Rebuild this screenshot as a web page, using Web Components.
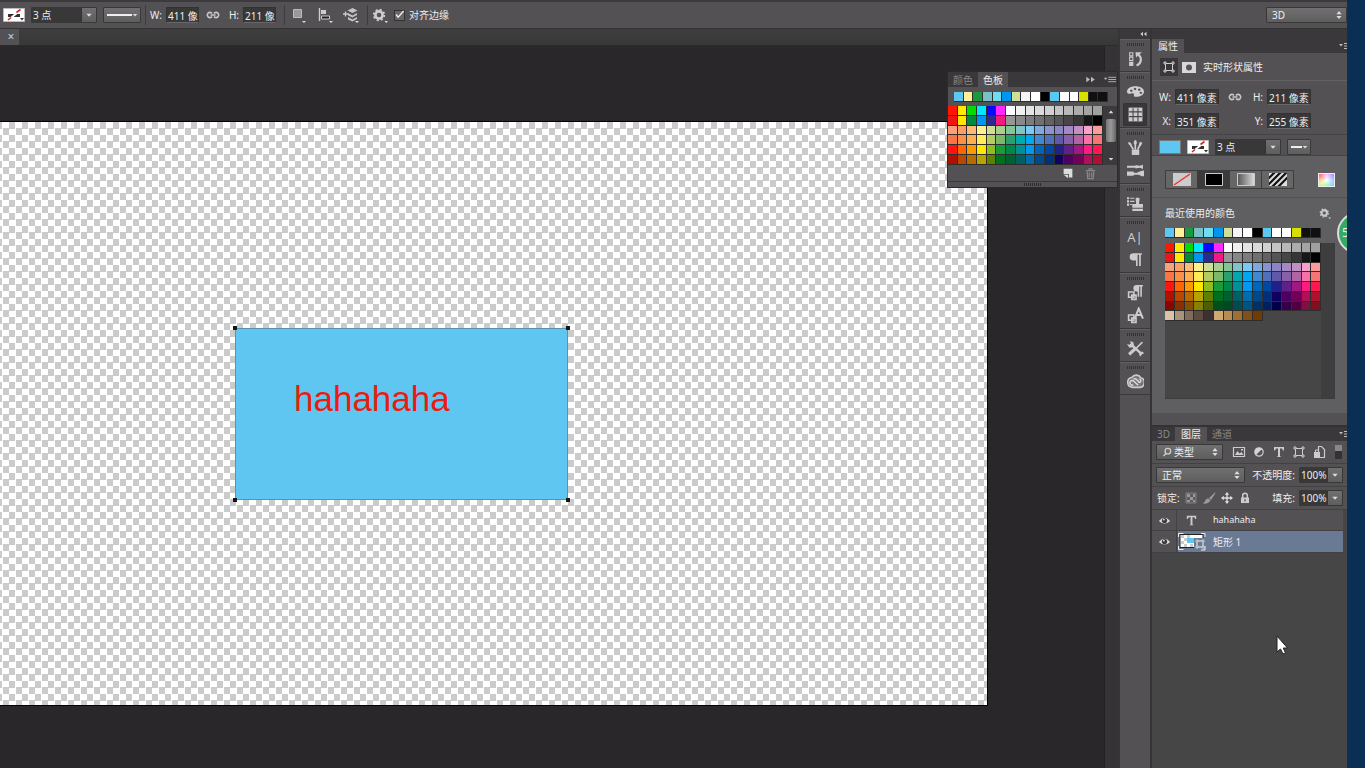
<!DOCTYPE html>
<html lang="zh-CN">
<head>
<meta charset="utf-8">
<title>图像编辑器</title>
<style>
html,body{margin:0;height:100%;background:#0b2c50;overflow:hidden}
body{font:10px/14px "Noto Sans","Noto Sans CJK SC",sans-serif;color:#eee}
</style>
</head>
<body>
<ps-app></ps-app>
<script>
const BASE = `*{box-sizing:border-box}button,input,select{font:inherit;color:inherit;margin:0;padding:0;border:0;background:none;border-radius:0;appearance:none;outline:0}svg{display:block;flex:none}[hidden]{display:none}`;

function define(name, css, html, setup) {
  const tpl = document.createElement('template');
  customElements.define(name, class extends HTMLElement {
    connectedCallback() {
      if (this.shadowRoot) return;
      const root = this.attachShadow({ mode: 'open' });
      tpl.innerHTML = `<style>${BASE}${css}</style>` + (typeof html === 'function' ? html(this) : html);
      root.append(tpl.content.cloneNode(true));
      if (setup) setup(this, root);
    }
  });
}

const GLYPHS = {
  link: '<g fill="none" stroke="#c8c8c8" stroke-width="1.6"><path d="M7 6.400a2.600 2.600 0 1 0 0 3.200M9 6.400a2.600 2.600 0 1 1 0 3.200M5.500 8h5"/></g>',
  square: '<path d="M2.500 2.500h8v8h-8z" fill="#999" stroke="#bbb"/><path d="M11 14h4l-2 2z" fill="#ddd"/>',
  align: '<path d="M2.500 1v13" stroke="#ccc" stroke-width="1.4"/><path d="M4 3h5v4H4z" fill="#ccc"/><path d="M4.500 9h8v3h-8z" fill="#222" stroke="#ccc"/><path d="M12 14h4l-2 2z" fill="#ddd"/>',
  stack: '<path d="M0 7h5M2.500 4.500v5" stroke="#ccc" stroke-width="1.3"/><path d="M9.500 1l5 2.500-5 2.500-5-2.500zM5 6l4.500 2.500L14 6v2l-4.500 2.500L5 8.500zM5 10l4.500 2.500L14 10v2l-4.500 2.500L5 12.500z" fill="#c4c4c4"/><path d="M12 14h4l-2 2z" fill="#ddd"/>',
  gear: '<circle cx="7" cy="8" r="3.600" fill="none" stroke="#ccc" stroke-width="2.600"/><circle cx="7" cy="8" r="5.300" fill="none" stroke="#ccc" stroke-width="1.800" stroke-dasharray="2.080 2.080"/><path d="M12.500 14h3.500l-1.700 2z" fill="#ddd"/>',
  history: '<path d="M2.500 2.500h3v3h-3zM2.500 6.800h3v3h-3z" fill="none" stroke="#ccc"/><path d="M2 11h4v4H2z" fill="#ccc"/><path d="M9 14.500c5-2 5-7 2-10" fill="none" stroke="#ccc" stroke-width="2"/><path d="M8 2h6l-5.500 5z" fill="#ccc"/>',
  palette: '<path fill-rule="evenodd" d="M8 3c4.500 0 8 2 8 5.200 0 2.800-3.500 4.800-7.500 4.800-2 0-2.200-1-2-2 .2-1.500-1.500-1.500-3-1C1.500 10.600 0 10 0 8c0-3 3.500-5 8-5zM4 6.200a1.200 1 0 1 0 .1 0zM7.500 4.500a1.200 1 0 1 0 .1 0zM11.500 5.200a1.200 1 0 1 0 .1 0zM13 8.200a1.200 1 0 1 0 .1 0z" fill="#d0d0d0"/>',
  grid: '<path d="M1.500 1.500h13v13h-13z" fill="#ccc"/><path d="M2 5.500h12M2 10h12M5.700 2v12M10.300 2v12" stroke="#444" stroke-width="1"/>',
  brushes: '<path d="M4.500 10h7v5h-7z" fill="#ccc"/><path d="M7.800 10V2M6 10L3 5M10 10l3-6" stroke="#ccc" stroke-width="1.600"/><path d="M6.500 5c-.5-3 1-4 1.500-4s1.800 1.500 1 4zM1 3c2 0 3 .5 3.500 3-2 0-3.500-1-3.500-3zM12 2.500l2.500 1-1.500 3h-2z" fill="#ccc"/>',
  presets: '<path d="M0 4.500h10M6 11h10" stroke="#ccc" stroke-width="1.800"/><path d="M8 3l4 .5 3-1v4l-3-1-4 .5zM16 8c-3 0-4 1-7 2.500 3 1.500 4 3 7 3zM0 9h6l1 2-1 2H0z" fill="#ccc"/>',
  stamp: '<path d="M0 2h2v2H0zM0 5h2v2H0zM0 8h2v2H0zM3 2.500h4v1H3zM3 5.500h4v1H3zM3 8.500h2v1H3z" fill="#ccc"/><path d="M8.500 2.500h3c1 2-.5 3 0 6H15V12H5V8.500h3.500c.5-3-1-4 0-6zM5 13h10v2H5z" fill="#ccc"/>',
  para: '<path d="M6 2h8v1.500h-1V14h-1.600V3.500H10V14H8.500V9H6a3.500 3.500 0 0 1 0-7z" fill="#ccc"/>',
  parastyle: '<path d="M9 1h6v1.300h-1V12h-1.500V2.300H11.500V12H10V7H9a3 3 0 0 1 0-6z" fill="#ccc"/><path d="M1.500 7.500h5v5h-5zM4.500 10.500h4v4h-4z" fill="#535154" stroke="#ccc" stroke-width="1.500"/>',
  charstyle: '<path d="M1.500 7.500h5v5h-5zM4.500 10.500h4v4h-4z" fill="#535154" stroke="#ccc" stroke-width="1.500"/><path fill="none" stroke="#ccc" stroke-width="1.900" d="M7.500 10.500l3.500-9 4 9.500M9 7.500h5"/>',
  tools: '<path d="M4.500 4.500l9.500 9" stroke="#ccc" stroke-width="2.200"/><path d="M14.500 2L8 8.500" stroke="#ccc" stroke-width="1.500"/><path d="M8 8L2 13.500" stroke="#ccc" stroke-width="3"/><path d="M0 3.500l2 1 1.500-1L3 1l3 1 .5 3L5 7H2zM12 11l3 0 1 2-1.500 0-1.500 1 .5 1.500-2-1z" fill="#ccc"/>',
  cloud: '<path d="M5 13.500a4.700 4.700 0 0 1-.5-9.300A5 5 0 0 1 13 4.500 4.600 4.600 0 0 1 12 13.500z" fill="#777" stroke="#ccc" stroke-width="1.500"/><path d="M10.500 11.500L6.500 7.700a2.200 2.200 0 1 0-.5 3.500M6 5.800c3-1.500 4 1.500 5.500 3.200a1.600 1.600 0 0 0 0-3.200" fill="none" stroke="#ddd" stroke-width="1.300"/>',
  shape: '<path d="M4.500 4.500h7v7h-7z" fill="none" stroke="#ccc"/><path d="M3 3h2v2H3zM11 3h2v2h-2zM3 11h2v2H3zM11 11h2v2h-2z" fill="#444" stroke="#ccc"/>',
  mask: '<path d="M1 3h14v11H1z" fill="#d8d8d8"/><circle cx="8" cy="8.500" r="3" fill="#555"/>',
  image: '<path d="M2.500 3.500h11v9h-11z" fill="none" stroke="#ccc" stroke-width="1.200"/><path d="M4 11l2.500-4 2 2.500L10.500 8l2 3z" fill="#ccc"/><path d="M10 5h2v1.500h-2z" fill="#ccc"/>',
  adjust: '<circle cx="8" cy="8" r="4.200" fill="#555" stroke="#ccc" stroke-width="1.200"/><path d="M5 11A4.200 4.200 0 0 1 11 5z" fill="#d4d4d4"/>',
  smart: '<path d="M7.500 2.500h3l3 3v8h-6z" fill="none" stroke="#ccc" stroke-width="1.200"/><path d="M3 8h6v6H3z" fill="#ccc"/><path d="M4.500 8V6h3v2" fill="none" stroke="#ccc"/>',
  checker: '<path d="M3 3h10v10H3z" fill="#5c5c5c" stroke="#808080"/><path d="M4 4h3v3H4zM10 4h2v3h-2zM7 7h3v3H7zM4 10h3v2H4zM10 10h2v2h-2z" fill="#999"/>',
  brush: '<path d="M14.500 2L8 8l2 2 4-6zM7.500 8.500l2 2c-1.500 3-5 3.500-8 3 2-.8 2.500-2 3-3.500.5-1.200 2-1.800 3-1.500z" fill="#999"/>',
  move: '<path d="M8 3v10M3 8h10" stroke="#ddd" stroke-width="1.400"/><path d="M8 2l2.200 2.800H5.800zM8 14l2.200-2.800H5.800zM2 8l2.800-2.200v4.400zM14 8l-2.800-2.200v4.400z" fill="#ddd"/>',
  lock: '<path d="M5.700 8V5.500a2.300 2.300 0 0 1 4.600 0V8" fill="none" stroke="#ccc" stroke-width="1.500"/><path d="M4 7.500h8V13H4z" fill="#ccc"/><path d="M7.500 9h1v2.500h-1z" fill="#444"/>',
  eye: '<path d="M2 8.500Q8 1.500 14 8.500 8 14 2 8.500z" fill="#ddd"/><circle cx="8" cy="8" r="2.800" fill="#3c3c3c"/><circle cx="7.300" cy="7" r="1" fill="#ddd"/>',
  search: '<circle cx="9" cy="7" r="3.200" fill="none" stroke="#ccc" stroke-width="1.500"/><path d="M7 9.500L4 12.500" stroke="#ccc" stroke-width="1.600"/>',
  newpage: '<path d="M3 3h10v10H9V9H3z" fill="#ddd"/><path d="M3 10h5v4z" fill="#ddd"/>',
  trash: '<path d="M3 5h10M6.500 4V3h3v1M4.500 6l.5 7.500h6l.5-7.500M6.700 7v5M9.300 7v5" fill="none" stroke="#888" stroke-width="1.300"/>',
  menu: '<path d="M1 6h4L3 8.500z" fill="#bbb"/><path d="M6 5.500h9M6 8h9M6 10.500h9" stroke="#bbb"/>',
  updown: '<path d="M5 7h6L8 3.500zM5 9h6l-3 3.500z" fill="#ddd"/>',
  down: '<path d="M5 6.500h6L8 10z" fill="#ddd"/>',
  ffwd: '<path d="M3 5l4 3-4 3zM8 5l4 3-4 3z" fill="#bbb"/>',
  rewind: '<path d="M8 5.500L5 8l3 2.500zM12 5.500L9 8l3 2.500z" fill="#ccc"/>',
  check: '<path d="M3 6.500l3 4L14 1.500" fill="none" stroke="#eee" stroke-width="2"/>',
  layert: '<path d="M3 3h10v3.500h-1L11 4.500H9v7.700l1.500.8H5.500L7 12.200V4.500H5L4 6.500H3z" fill="#ccc"/>',
};
const ico = (n, s = 16) => `<svg width="${s}" height="${s}" viewBox="0 0 16 16" aria-hidden="true">${GLYPHS[n]}</svg>`;

const LINE_NONE = '<svg width="22" height="14" viewBox="0 0 22 14" aria-hidden="true"><path d="M.5.5h21v13H.5z" fill="#fff" stroke="#bbb"/><path d="M5 6h12v3H5z" fill="#333"/><path d="M6 11.500L17 2.500" stroke="#fff" stroke-width="2"/><path d="M5 12l3-2.500M13.500 4.500l4-3" stroke="#d22" stroke-width="1.600"/><path d="M17 10h4l-2 2.500z" fill="#333"/></svg>';

/* colour data */
const RECENT = '#5ec6f2 #fff09a #1a9a3c #7ac0c8 #6fdcf0 #0095ee #cfdf9a #f5f5f8 #ffffff #000000 #5ec6f2 #ffffff #ffffff #d8e000 #101010 #101010'.split(' ');
const COLORS = `#ff1800 #ffea00 #00dc00 #00e8ff #0808ff #ff28ff #ffffff #f0f0f0 #e4e4e4 #dadada #d0d0d0 #c4c4c4 #b8b8b8 #acacac #a4a4a4 #a0a0a0
#f01515 #ffe800 #008a3c #0095f0 #2a2a90 #f01a80 #959595 #888888 #7c7c7c #707070 #626262 #555555 #464646 #363636 #161616 #000000
#fba078 #fba068 #fdba78 #fff090 #cfdf98 #a8cf90 #86c498 #80c4c8 #78c8f8 #80a8e0 #8894d0 #8c84c4 #a488c4 #c090c4 #f8a0c8 #fa9c9c
#fa7444 #fb9048 #fcb050 #ffec58 #b4cc60 #7cb86c #28a070 #00a8b0 #00a8f4 #4088d0 #5070bc #6058a8 #8860a8 #b064a4 #f870a4 #f87474
#ff1510 #ff6600 #ff9900 #ffe800 #90bc20 #1c9a3a #008848 #009098 #0098f0 #0066b8 #0048a0 #202088 #602088 #a01880 #ff1a80 #ff1850
#b01000 #b84800 #b86c00 #b8a400 #608000 #007020 #006030 #006064 #006cac #004888 #003078 #100060 #4c0060 #700058 #b01058 #b01030
#880800 #883000 #885000 #888000 #4c6000 #005018 #004820 #004c50 #005484 #003068 #002060 #000048 #340048 #500040 #801040 #801020
#d8c4a8 #a8947c #806c58 #5c4c40 #3c3030 #d0a870 #b88c50 #a07030 #805018 #703c00`.split(/\s+/);

define('ps-swatches', `:host{display:block}div{display:grid;grid-template-columns:repeat(16,1fr);height:100%}button{display:block;width:100%;height:100%;border:solid #2e2e2e;border-width:0 1px 1px 0}`,
  el => {
    const rows = +el.getAttribute('rows');
    const list = rows === 1 ? RECENT : COLORS.slice(0, rows * 16);
    return `<div style="grid-template-rows:repeat(${rows},1fr)">${list.map(c => `<button aria-label="${c}" style="background:${c}"></button>`).join('')}</div>`;
  });

/* labelled number field */
define('ps-field', `:host{display:block}label{display:flex;align-items:center;gap:4px}span{text-align:right;width:12px}input{width:var(--w,44px);height:16px;background:#383838;border:1px solid #323232;border-bottom-color:#686868;padding-left:1px}`,
  el => `<label><span>${el.getAttribute('label')}</span><input value="${el.getAttribute('value')}"></label>`);

/* drop-down: the arrow sits over the native select */
define('ps-select', `:host{display:block;height:16px}
div{display:grid;height:100%;background:linear-gradient(#707070,#5e5e5e);border:1px solid #383838;border-radius:1px;align-items:center}
select{grid-area:1/1;width:100%;height:100%;padding-left:var(--pad,5px)}option{color:#000}
i{grid-area:1/1;justify-self:end;display:flex;align-items:center;height:100%;pointer-events:none}
.line i{width:10px;justify-content:center}
.field{background:#383838}.field i{background:linear-gradient(#707070,#5e5e5e);border-left:1px solid #333}
b{grid-area:1/1;pointer-events:none;display:flex;padding-left:3px}
b u{flex:1;height:2px;background:#eee;margin-right:8px}`,
  el => {
    const kind = el.getAttribute('kind') || '';
    const mark = kind === 'line' ? '<b><u></u></b>' : el.hasAttribute('icon') ? `<b>${ico(el.getAttribute('icon'), 14)}</b>` : '';
    return `<div class="${kind}"><select aria-label="${el.getAttribute('label')}"><option>${el.getAttribute('value') || ''}</option></select>${mark}<i>${ico(el.hasAttribute('both') ? 'updown' : 'down', kind === 'line' ? 12 : 14)}</i></div>`;
  });

define('ps-options', `:host{display:flex;align-items:center;height:29px;background:#535154;border-top:2px solid #3c3a3d;border-bottom:1px solid #333;padding-left:3px}
.g{display:flex;align-items:center}
.s{gap:6px}hr{width:1px;height:20px;border:0;background:#3e3c3f;margin:0 4px}
.link{margin:0 6px}
button{display:block}.tools{gap:10px;margin:0 4px 0 2px}
label.c{display:flex;align-items:center;gap:4px;margin-left:6px}.box{display:grid;width:11px;height:11px}.box>*{grid-area:1/1}.box input{background:#666;border:1px solid #333;width:11px;height:11px}.box svg{pointer-events:none}
.mode{width:81px;margin-left:auto}`,
  `<div class="g s"><button aria-label="描边">${LINE_NONE}</button><ps-select kind="field" label="描边宽度" value="3 点" style="width:66px;--pad:1px"></ps-select><ps-select kind="line" label="线型" style="width:38px"></ps-select></div><hr>
  <ps-field label="W:" value="411 像素" style="--w:33px"></ps-field><button class="link" aria-label="链接">${ico('link')}</button><ps-field label="H:" value="211 像素" style="--w:33px"></ps-field><hr style="margin-left:8px">
  <div class="g tools"><button aria-label="路径操作">${ico('square')}</button><button aria-label="对齐">${ico('align')}</button><button aria-label="排列">${ico('stack')}</button></div><hr>
  <button aria-label="设置">${ico('gear')}</button>
  <label class="c"><span class="box"><input type="checkbox" checked>${ico('check', 11)}</span>对齐边缘</label>
  <ps-select class="mode" both label="工作区" value="3D"></ps-select>`);

define('ps-shape', `:host{display:block;position:absolute;left:235px;top:206px;width:333px;height:172px;background:#5ec6f0;border:1px solid #5a93ad}
p{margin:48px 0 0 58px;font:35px/44px "Liberation Sans",sans-serif;color:#e81c10;width:max-content}
i{position:absolute;width:4px;height:4px;background:#161616}
i:nth-of-type(odd){left:-3px}i:nth-of-type(even){right:-3px}i:nth-of-type(-n+2){top:-3px}i:nth-of-type(n+3){bottom:-3px}`,
  `<p>hahahaha</p><i></i><i></i><i></i><i></i>`);

define('ps-workspace', `:host{display:flex;flex-direction:column;min-width:0;position:relative;background:#29272a}
.tabs{height:17px;background:linear-gradient(#3e3e3e,#383838);border-bottom:1px solid #2a2a2a;display:flex}
.tabs button{width:19px;background:#535154;font-size:12px;line-height:14px;color:#ccc;padding-left:3px}
.body{flex:1;display:flex;min-height:0}
.view{flex:1;display:flex;padding:76px 117px 63px 0}
.canvas{flex:1;position:relative;outline:1px solid #000;background:conic-gradient(#fff 25%,#cbcbcb 0 50%,#fff 0 75%,#cbcbcb 0) 9px 0/13px 13px}
.bar{width:14px;background:#353336;border-left:1px solid #222}`,
  `<div class="tabs"><button aria-label="关闭">×</button></div><div class="body"><div class="view"><div class="canvas"><ps-shape></ps-shape></div></div><div class="bar"></div></div><ps-float></ps-float>`);

define('ps-float', `:host{display:block;position:absolute;right:0;top:42px;width:171px;background:#535154;border:1px solid #2c2a2d}
.tabs{display:flex;align-items:stretch;height:15px;background:#3a383b;color:#888}
.tabs button{padding:0 5px}.tabs .on{background:#535154;color:#eee}.tabs span{margin-left:auto;display:flex;gap:4px}
.tabs svg{height:15px}
.recent{margin:5px 9px 4px 6px;height:10px}
.main{display:flex;height:59px}.main ps-swatches{width:156px}
.sb{flex:1;background:#3c3a3d;display:flex;flex-direction:column;align-items:center;justify-content:space-between;padding:0 0 0 2px}
.sb i{width:10px;height:23px;border-radius:2px;background:linear-gradient(90deg,#777,#999,#666);margin-top:-10px}
.up{transform:rotate(180deg)}
footer{display:flex;justify-content:flex-end;height:16px;align-items:center;gap:8px;padding-right:19px}
.grip{height:6px;border-top:1px solid #3a383b;display:flex;justify-content:center;align-items:center}.grip i{width:17px;height:3px;background:repeating-linear-gradient(90deg,#2e2e2e 0 1px,#535154 1px 2px)}`,
  `<div class="tabs"><button>颜色</button><button class="on">色板</button><span>${ico('ffwd')}${ico('menu', 14)}</span></div>
  <ps-swatches class="recent" rows="1"></ps-swatches>
  <div class="main"><ps-swatches rows="6"></ps-swatches><div class="sb"><span class="up">${ico('down', 12)}</span><i></i>${ico('down', 12)}</div></div>
  <footer><button aria-label="新建">${ico('newpage', 14)}</button><button aria-label="删除">${ico('trash', 15)}</button></footer><div class="grip"><i></i></div>`);

const RAIL = [['history'], ['palette', 'grid'], ['brushes', 'presets'], ['stamp'], ['A', 'para'], ['parastyle', 'charstyle'], ['tools'], ['cloud']];
define('ps-rail', `:host{display:block;width:34px;background:#535154;border:solid #363437;border-width:0 2px}
.top{height:10px;background:#3a383b;display:flex;justify-content:flex-end;align-items:center}
section{border-bottom:1px solid #3a383b;border-top:1px solid #616062;padding:2px 0 1px;display:flex;flex-direction:column;align-items:center}
i{width:17px;height:3px;margin:1px 0;background:repeating-linear-gradient(90deg,#333 0 1px,#535154 1px 2px)}
button{width:24px;height:23px;display:flex;align-items:center;justify-content:center;font-size:13px;line-height:14px;color:#ccc}
button.on{background:#39373a;border-radius:2px;box-shadow:0 0 0 1px #333 inset}`,
  `<div class="top">${ico('rewind', 14)}</div>` + RAIL.map(g => `<section><i></i>${g.map(n => `<button class="${n === 'grid' ? 'on' : ''}" aria-label="${n}">${n === 'A' ? 'A|' : ico(n, 17)}</button>`).join('')}</section>`).join(''));

define('ps-properties', `:host{display:block;background:#535154}
.strip{height:10px;background:#3a383b}
.tabs{display:flex;height:14px;background:#3a383b}.tabs button{background:#535154;padding:0 6px;line-height:14px}.tabs svg{margin:-1px -7px 0 auto}
.head{display:flex;align-items:center;height:28px;gap:3px;padding-left:8px;border-bottom:1px solid #636163}
.head button{display:flex}.head .on{background:#39373a;padding:1px}.head span{margin-left:3px}
.fields{display:grid;grid-template-columns:60px 32px 60px;row-gap:8px;padding:8px 0 5px 7px;align-items:center;border-bottom:1px solid #454346}
.fields button{margin:auto}
.stroke{display:flex;height:20px;padding-top:3px;align-items:center;gap:6px;padding-left:7px}.fill{width:22px;height:14px;background:#5ec6f2;border:1px solid #777}
.pop{background:#5f5e60;border-top:1px solid #444;padding-bottom:14px}
.seg{display:flex;align-items:center;padding:14px 12px 8px 13px;border-bottom:1px solid #525153}
.seg button{width:33px;height:19px;border:1px solid #3c3c3c;background:#666;display:grid;place-items:center;margin-right:-1px}
.seg .on{background:#3c3a3d}.seg .pick{margin:0 0 0 auto;width:17px;height:14px;border:1px solid #eee;background:radial-gradient(#fff,#fff0),conic-gradient(#f9f,#88f,#6cf,#6f8,#ee5,#f55,#f9f)}
.title{display:flex;justify-content:space-between;align-items:center;padding:8px 16px 0 13px}
.recent{width:156px;height:10px;margin:8px 0 5px 13px}
.list{display:flex;margin:0 12px 0 13px;height:156px;background:#464646;border:solid #3c3c3c;border-width:0 1px 1px 0}
.list ps-swatches{width:156px;height:78px}.list i{flex:1;background:#3e3e3e}`,
  `<div class="strip"></div><div class="tabs"><button>属性</button>${ico('menu')}</div>
  <div class="head"><button class="on" aria-label="形状">${ico('shape')}</button><button aria-label="蒙版">${ico('mask')}</button><span>实时形状属性</span></div>
  <div class="fields"><ps-field label="W:" value="411 像素"></ps-field><button aria-label="链接">${ico('link')}</button><ps-field label="H:" value="211 像素"></ps-field>
  <ps-field label="X:" value="351 像素"></ps-field><span></span><ps-field label="Y:" value="255 像素"></ps-field></div>
  <div class="stroke"><button class="fill" aria-label="填充"></button><button aria-label="描边">${LINE_NONE}</button><ps-select kind="field" label="描边宽度" value="3 点" style="width:66px;--pad:1px"></ps-select><ps-select kind="line" label="线型" style="width:24px"></ps-select></div>
  <div class="pop"><div class="seg">
  <button aria-label="无颜色"><svg width="18" height="13"><path d="M0 0h18v13H0z" fill="#ccc"/><path d="M1 12L17 1" stroke="#e33" stroke-width="1.500"/></svg></button>
  <button class="on" aria-label="纯色"><svg width="18" height="13"><path d="M.5.5h17v12H.5z" stroke="#ccc"/></svg></button>
  <button aria-label="渐变"><svg width="18" height="13"><defs><linearGradient id="g"><stop stop-color="#555"/><stop offset="1" stop-color="#ddd"/></linearGradient></defs><path d="M.5.5h17v12H.5z" fill="url(#g)" stroke="#ccc"/></svg></button>
  <button aria-label="图案"><svg width="18" height="13"><path d="M0 0h18v13H0z" fill="#ddd"/><path d="M-2 7l8-8M-2 13L12-1M3 14L18-1M9 14L20 3" stroke="#111" stroke-width="2.200"/></svg></button>
  <button class="pick" aria-label="拾色器"></button></div>
  <div class="title"><span>最近使用的颜色</span><button aria-label="选项">${ico('gear', 12)}</button></div>
  <ps-swatches class="recent" rows="1"></ps-swatches><div class="list"><ps-swatches rows="8"></ps-swatches><i></i></div></div>`);

define('ps-layer', `:host{display:flex;align-items:center;height:21px;border-bottom:1px solid #434144;margin-right:4px;background:#535154;font-size:9px}
:host([selected]){background:linear-gradient(90deg,#535154 26px,#6b7a94 26px);font-size:10px;height:22px}
.e{width:25px;display:flex;justify-content:center;border-right:1px solid #434144;height:100%;align-items:center}
.t{width:29px;display:flex;justify-content:center}span{padding-left:7px}`,
  el => `<button class="e" aria-label="可见性">${ico('eye', 15)}</button><div class="t">${el.hasAttribute('selected')
    ? '<svg width="29" height="19" viewBox="0 0 29 19"><path d="M3 2.500h23v13H3z" fill="#fff" stroke="#222"/><path d="M4 3h3v3H4zM10 3h3v3h-3zM7 6h3v3H7zM4 9h3v3H4zM7 12h3v3H7zM13 12h3v3h-3z" fill="#ccc"/><path d="M10 6h7v5h-7z" fill="#5ec6f0"/><path d="M17 6h11v11H17z" fill="#6b7a94"/><path d="M20 9h6v6h-6z" fill="none" stroke="#eee"/><path d="M19 8h2v2h-2zM25 8h2v2h-2zM19 14h2v2h-2zM25 14h2v2h-2z" fill="#6b7a94" stroke="#ddd" stroke-width=".8"/><path d="M1.500 5V1.500h5M24 1.500h4V5M1.500 14v3.500h5M24 18h4v-4" fill="none" stroke="#eee"/></svg>'
    : ico('layert', 15)}</div><span><slot></slot></span>`);

define('ps-layers', `:host{display:flex;flex-direction:column;flex:1;background:#464646;border-top:2px solid #343235;min-height:0}
.tabs{display:flex;height:14px;background:#3a383b;color:#888}.tabs button{padding:0 5px;line-height:14px}.tabs .on{background:#535154;color:#eee;padding:0 6px}.tabs svg{margin:-1px -7px 0 auto}
.row{display:flex;align-items:center;height:23px;background:#535154;border-bottom:1px solid #434144;padding-left:4px}
.type{width:67px;--pad:17px}.filters{display:flex;align-items:center;gap:4px;margin-left:8px}.row i{width:7px;height:14px;background:linear-gradient(#888 45%,#333 45%);margin-left:8px}
.mode{width:89px}.row label{margin-left:auto;margin-right:4px}.pct{width:44px;--pad:1px;margin-right:4px}
.lock{padding-left:5px}.locks{display:flex;gap:2px;margin-left:3px}.locks button,.filters button{display:block}`,
  `<div class="tabs"><button>3D</button><button class="on">图层</button><button>通道</button>${ico('menu')}</div>
  <div class="row"><ps-select class="type" both icon="search" label="过滤" value="类型"></ps-select><div class="filters">${['image', 'adjust', 'layert', 'shape', 'smart'].map(n => `<button aria-label="${n}">${ico(n)}</button>`).join('')}</div><i></i></div>
  <div class="row"><ps-select class="mode" both label="混合模式" value="正常"></ps-select><label>不透明度:</label><ps-select class="pct" kind="field" label="不透明度" value="100%"></ps-select></div>
  <div class="row lock"><span>锁定:</span><div class="locks">${['checker', 'brush', 'move', 'lock'].map(n => `<button aria-label="${n}">${ico(n)}</button>`).join('')}</div><label>填充:</label><ps-select class="pct" kind="field" label="填充" value="100%"></ps-select></div>
  <ps-layer>hahahaha</ps-layer><ps-layer selected>矩形 1</ps-layer>`);

define('ps-app', `:host{display:flex;height:100vh}
.window{flex:1;min-width:0;display:flex;flex-direction:column;position:relative;overflow:hidden;border-right:1px solid #2c2440}
.main{flex:1;display:flex;min-height:0}ps-workspace{flex:1}
aside{width:195px;display:flex;flex-direction:column;background:#535154}
ps-layers{margin-top:12px}
.edge{width:17px;background:#0b2f54}
.badge{position:absolute;right:-32px;top:212px;width:42px;height:42px;border-radius:50%;background:#36aa60;border:2px solid #ddd;font-size:12px;line-height:38px;padding-left:3px}
.cursor{position:absolute;right:59px;top:635px}`,
  `<div class="window"><ps-options></ps-options><div class="main"><ps-workspace></ps-workspace><ps-rail></ps-rail><aside><ps-properties></ps-properties><ps-layers></ps-layers></aside></div>
  <div class="badge">5</div><svg class="cursor" width="12" height="20"><path d="M1 1v16l3.500-3 2.500 5 2.500-1.200L7.200 13H11.500z" fill="#fff" stroke="#222"/></svg></div><div class="edge"></div>`);
</script>
</body>
</html>
